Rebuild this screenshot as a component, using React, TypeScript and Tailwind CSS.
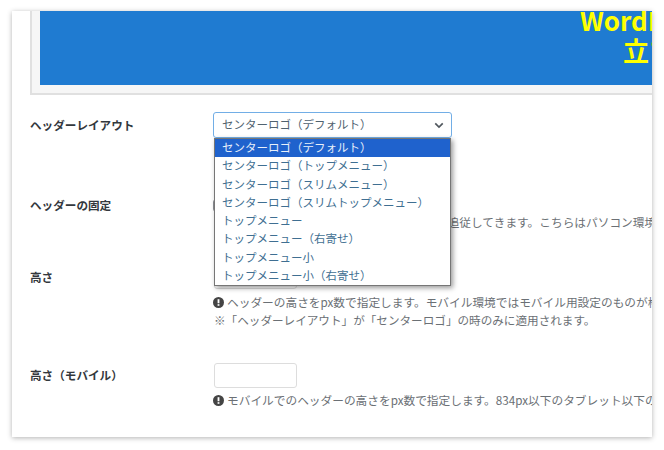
const jp = "font-['Noto_Sans_CJK_JP','Noto_Sans',sans-serif]";

const options = [
  "センターロゴ（デフォルト）",
  "センターロゴ（トップメニュー）",
  "センターロゴ（スリムメニュー）",
  "センターロゴ（スリムトップメニュー）",
  "トップメニュー",
  "トップメニュー（右寄せ）",
  "トップメニュー小",
  "トップメニュー小（右寄せ）",
];

function InfoIcon() {
  return (
    <svg viewBox="0 0 12 12" className="w-[11px] h-[11px] shrink-0 mr-[3px]">
      <circle cx="6" cy="6" r="6" fill="#444" />
      <rect x="5" y="2.4" width="2" height="4.4" fill="#fff" />
      <rect x="5" y="7.8" width="2" height="1.8" fill="#fff" />
    </svg>
  );
}

function Help({ children }: { children: React.ReactNode }) {
  return (
    <p className="flex items-center h-[18px] -ml-[1px] text-[11.7px] text-[#6b7075] whitespace-nowrap">
      <InfoIcon />
      {children}
    </p>
  );
}

function Label({ children }: { children: React.ReactNode }) {
  return <div className="w-[184px] shrink-0 text-[11.6px] leading-[18px] font-bold text-[#33383d]">{children}</div>;
}

function TextInput() {
  return <div className="w-[83px] h-[25px] bg-white border border-[#ddd] rounded-[3px]" />;
}

export default function App() {
  return (
    <div className={`${jp} w-[664px] h-[450px] bg-white overflow-hidden pt-[11px] pl-[12px]`}>
      <div className="w-[640px] h-[426px] bg-white shadow-[0_1px_5px_rgba(0,0,0,0.3)] overflow-hidden pl-[18px]">
        <div className="h-[84px] w-[622px] bg-[#f6f6f6] border-l-2 border-b-2 border-[#e0e0e0] pl-[8px]">
          <div className="h-[74px] bg-[#1f7bd1] overflow-hidden text-[#ffff00] text-[26px] font-bold leading-[30px] whitespace-nowrap">
            <div className="-mt-[6px] ml-[540px]">WordPress</div>
            <div className="ml-[583px]">立ち上げ</div>
          </div>
        </div>

        <div className="flex h-[26px] items-center mt-[17px]">
          <Label>ヘッダーレイアウト</Label>
          <div className="relative -ml-[1px] w-[239px] h-[26px] flex items-center justify-between pl-[8px] pr-[7px] border border-[#72aee6] rounded-[3px] text-[11.5px] text-[#50626f]">
            センターロゴ（デフォルト）
            <svg viewBox="0 0 12 8" className="w-[10px] h-[7px]">
              <path d="M1.5 1.5 6 6l4.5-4.5" fill="none" stroke="#50575e" strokeWidth="2" />
            </svg>
            <ul className="absolute z-10 left-0 top-[25px] w-[237px] h-[148px] bg-white border border-[#767676] shadow-[2px_2px_5px_rgba(0,0,0,0.4)] text-[11.5px] text-[#3f6f92]">
              {options.map((o, i) => (
                <li
                  key={o}
                  className={`h-[18.25px] leading-[16.5px] pl-[7px] whitespace-nowrap ${i === 0 ? "bg-[#1f62cd] text-[#e8f0fa]" : ""}`}
                >
                  {o}
                </li>
              ))}
            </ul>
          </div>
        </div>

        <div className="flex mt-[58px] h-[18px] items-center">
          <Label>ヘッダーの固定</Label>
          <div className="w-[13px] h-[13px] -ml-[1px] bg-white border border-[#8c8f94] rounded-[3px]" />
        </div>
        <div className="ml-[184px] -mt-[1px] h-[18px] overflow-hidden">
          <Help>ヘッダーを固定すると、スクロールしても追従してきます。こちらはパソコン環境の設定です。</Help>
        </div>

        <div className="flex mt-[33px]">
          <div className="pt-[4px]">
            <Label>高さ</Label>
          </div>
          <div>
            <TextInput />
            <div className="mt-[4px]">
              <Help>ヘッダーの高さをpx数で指定します。モバイル環境ではモバイル用設定のものが権</Help>
              <p className="h-[18px] text-[11.6px] leading-[18px] text-[#6b7075] whitespace-nowrap">
                ※「ヘッダーレイアウト」が「センターロゴ」の時のみに適用されます。
              </p>
            </div>
          </div>
        </div>

        <div className="flex mt-[34px]">
          <div className="pt-[3px]">
            <Label>高さ（モバイル）</Label>
          </div>
          <div>
            <TextInput />
            <div className="mt-[3px]">
              <Help>モバイルでのヘッダーの高さをpx数で指定します。834px以下のタブレット以下の</Help>
            </div>
          </div>
        </div>
      </div>
    </div>
  );
}
